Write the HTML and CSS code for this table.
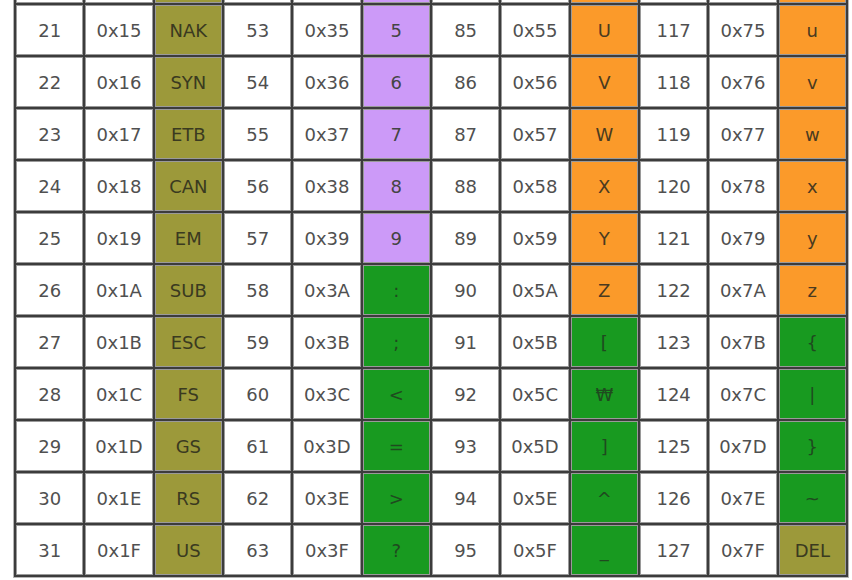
FILE: index.html
```html
<!DOCTYPE html>
<html>
<head>
<meta charset="utf-8">
<link rel="stylesheet" href="styles.css">
</head>
<body>
<table class="ascii">
<tr class="cut"><td></td><td></td><td class="ctl"></td><td></td><td></td><td class="dig"></td><td></td><td></td><td class="let"></td><td></td><td></td><td class="let"></td></tr>
<tr><td>21</td><td>0x15</td><td class="ctl">NAK</td><td>53</td><td>0x35</td><td class="dig">5</td><td>85</td><td>0x55</td><td class="let">U</td><td>117</td><td>0x75</td><td class="let">u</td></tr>
<tr><td>22</td><td>0x16</td><td class="ctl">SYN</td><td>54</td><td>0x36</td><td class="dig">6</td><td>86</td><td>0x56</td><td class="let">V</td><td>118</td><td>0x76</td><td class="let">v</td></tr>
<tr><td>23</td><td>0x17</td><td class="ctl">ETB</td><td>55</td><td>0x37</td><td class="dig">7</td><td>87</td><td>0x57</td><td class="let">W</td><td>119</td><td>0x77</td><td class="let">w</td></tr>
<tr><td>24</td><td>0x18</td><td class="ctl">CAN</td><td>56</td><td>0x38</td><td class="dig">8</td><td>88</td><td>0x58</td><td class="let">X</td><td>120</td><td>0x78</td><td class="let">x</td></tr>
<tr><td>25</td><td>0x19</td><td class="ctl">EM</td><td>57</td><td>0x39</td><td class="dig">9</td><td>89</td><td>0x59</td><td class="let">Y</td><td>121</td><td>0x79</td><td class="let">y</td></tr>
<tr><td>26</td><td>0x1A</td><td class="ctl">SUB</td><td>58</td><td>0x3A</td><td class="pun">:</td><td>90</td><td>0x5A</td><td class="let">Z</td><td>122</td><td>0x7A</td><td class="let">z</td></tr>
<tr><td>27</td><td>0x1B</td><td class="ctl">ESC</td><td>59</td><td>0x3B</td><td class="pun">;</td><td>91</td><td>0x5B</td><td class="pun">[</td><td>123</td><td>0x7B</td><td class="pun">{</td></tr>
<tr><td>28</td><td>0x1C</td><td class="ctl">FS</td><td>60</td><td>0x3C</td><td class="pun">&lt;</td><td>92</td><td>0x5C</td><td class="pun">₩</td><td>124</td><td>0x7C</td><td class="pun">|</td></tr>
<tr><td>29</td><td>0x1D</td><td class="ctl">GS</td><td>61</td><td>0x3D</td><td class="pun">=</td><td>93</td><td>0x5D</td><td class="pun">]</td><td>125</td><td>0x7D</td><td class="pun">}</td></tr>
<tr><td>30</td><td>0x1E</td><td class="ctl">RS</td><td>62</td><td>0x3E</td><td class="pun">&gt;</td><td>94</td><td>0x5E</td><td class="pun">^</td><td>126</td><td>0x7E</td><td class="pun">~</td></tr>
<tr><td>31</td><td>0x1F</td><td class="ctl">US</td><td>63</td><td>0x3F</td><td class="pun">?</td><td>95</td><td>0x5F</td><td class="pun">_</td><td>127</td><td>0x7F</td><td class="ctl">DEL</td></tr>
</table>
</body>
</html>
```

FILE: styles.css
```css
html, body {
  margin: 0;
  padding: 0;
  background: #ffffff;
  overflow: hidden;
}

.ascii {
  margin: -50px 0 0 13px;
  width: 836px;
  table-layout: fixed;
  border-collapse: separate;
  border-spacing: 2px;
  border: 1px solid #b4b4b4;
  background: #3c3c3c;
  font-family: "DejaVu Sans", "Noto Sans CJK KR", sans-serif;
  font-size: 18px;
  color: #505050;
}

.ascii td {
  height: 48px;
  padding: 0;
  border: 1px solid #9a9a9a;
  background: #ffffff;
  text-align: center;
  vertical-align: middle;
  white-space: nowrap;
  overflow: hidden;
}

.ascii td.ctl {
  background: #9c993a;
  color: #3a3a20;
}

.ascii td.dig {
  background: #cc9af8;
  color: #444444;
}

.ascii td.let {
  background: #fb9a2a;
  color: #4a3a20;
}

.ascii td.pun {
  background: #189a20;
  color: #1f4a1f;
}
```
